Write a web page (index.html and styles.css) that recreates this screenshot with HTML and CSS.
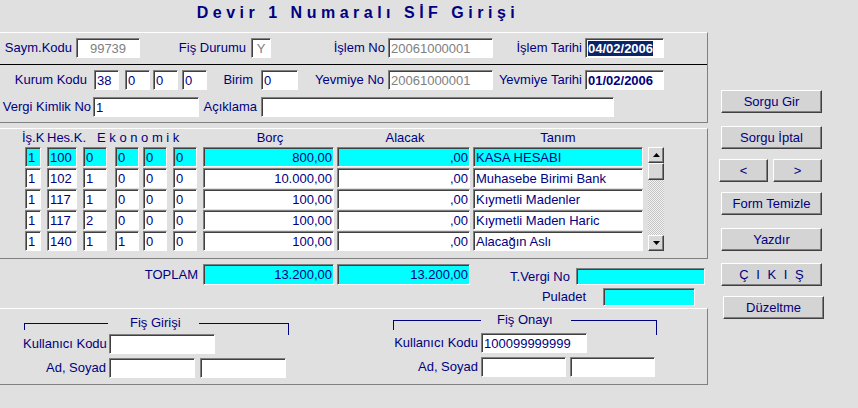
FILE: index.html
```html
<!DOCTYPE html>
<html lang="tr">
<head>
<meta charset="utf-8">
<title>Devir 1 Numaralı SİF Girişi</title>
<link rel="stylesheet" href="styles.css">
</head>
<body>
<div class="screen">
  <main class="main">
    <h1 class="title">Devir 1 Numaralı SİF Girişi</h1>

    <section class="panel">
      <div class="row head-r1">
        <span class="lbl l-saym">Saym.Kodu</span>
        <div class="f dis center w64">99739</div>
        <span class="lbl l-fis">Fiş Durumu</span>
        <div class="f dis center w20">Y</div>
        <span class="lbl l-islno">İşlem No</span>
        <div class="f dis w105">20061000001</div>
        <span class="lbl l-tarih">İşlem Tarihi</span>
        <div class="f w79"><span class="sel">04/02/2006</span></div>
      </div>
      <div class="row head-r2">
        <span class="lbl l-kurum">Kurum Kodu</span>
        <div class="f w25">38</div>
        <div class="f w25 ml6">0</div>
        <div class="f w25 ml3">0</div>
        <div class="f w25 ml4">0</div>
        <span class="lbl l-birim">Birim</span>
        <div class="f w37">0</div>
        <span class="lbl l-yevno">Yevmiye No</span>
        <div class="f dis w105">20061000001</div>
        <span class="lbl l-tarih">Yevmiye Tarihi</span>
        <div class="f w79 bold">01/02/2006</div>
      </div>
      <div class="row head-r3">
        <span class="lbl l-vergi">Vergi Kimlik No</span>
        <div class="f w106">1</div>
        <span class="lbl l-acik">Açıklama</span>
        <div class="f w353"></div>
      </div>
    </section>

    <section class="panel grid-panel">
      <div class="ghead">
        <span class="h-isk">İş.K</span>
        <span class="h-hes">Hes.K.</span>
        <span class="h-eko">E k o n o m i k</span>
        <span class="h-borc">Borç</span>
        <span class="h-alacak">Alacak</span>
        <span class="h-tanim">Tanım</span>
      </div>
      <div class="grid-body">
        <div class="rows">
          <div class="drow cur">
            <div class="f c-isk">1</div><div class="f c-hes">100</div><div class="f c-e1">0</div><div class="f c-e2">0</div><div class="f c-e3">0</div><div class="f c-e4">0</div><div class="f c-borc">800,00</div><div class="f c-alacak">,00</div><div class="f c-tanim">KASA HESABI</div>
          </div>
          <div class="drow">
            <div class="f c-isk">1</div><div class="f c-hes">102</div><div class="f c-e1">1</div><div class="f c-e2">0</div><div class="f c-e3">0</div><div class="f c-e4">0</div><div class="f c-borc">10.000,00</div><div class="f c-alacak">,00</div><div class="f c-tanim">Muhasebe Birimi Bank</div>
          </div>
          <div class="drow">
            <div class="f c-isk">1</div><div class="f c-hes">117</div><div class="f c-e1">1</div><div class="f c-e2">0</div><div class="f c-e3">0</div><div class="f c-e4">0</div><div class="f c-borc">100,00</div><div class="f c-alacak">,00</div><div class="f c-tanim">Kıymetli Madenler</div>
          </div>
          <div class="drow">
            <div class="f c-isk">1</div><div class="f c-hes">117</div><div class="f c-e1">2</div><div class="f c-e2">0</div><div class="f c-e3">0</div><div class="f c-e4">0</div><div class="f c-borc">100,00</div><div class="f c-alacak">,00</div><div class="f c-tanim">Kıymetli Maden Haric</div>
          </div>
          <div class="drow">
            <div class="f c-isk">1</div><div class="f c-hes">140</div><div class="f c-e1">1</div><div class="f c-e2">1</div><div class="f c-e3">0</div><div class="f c-e4">0</div><div class="f c-borc">100,00</div><div class="f c-alacak">,00</div><div class="f c-tanim">Alacağın Aslı</div>
          </div>
        </div>
        <div class="sb">
          <div class="sb-btn"><svg width="7" height="4" viewBox="0 0 7 4"><path d="M0 4H7L3.5 0Z" fill="#000"/></svg></div>
          <div class="sb-btn sb-thumb"></div>
          <div class="sb-space"></div>
          <div class="sb-btn"><svg width="7" height="4" viewBox="0 0 7 4"><path d="M0 0H7L3.5 4Z" fill="#000"/></svg></div>
        </div>
      </div>
    </section>

    <section class="totals">
      <span class="lbl l-toplam">TOPLAM</span>
      <div class="f cy h21 w131 right">13.200,00</div>
      <div class="f cy h21 w133 ml3 right">13.200,00</div>
      <div class="tot-right">
        <div class="row">
          <span class="lbl l-tv">T.Vergi No</span>
          <div class="f cy h17 w129"></div>
        </div>
        <div class="row pul-row">
          <span class="lbl l-pul">Puladet</span>
          <div class="f cy h18 w92"></div>
        </div>
      </div>
    </section>

    <section class="panel foot">
      <div class="group g1">
        <div class="legend">
          <span class="lg-line lg-l"></span>
          <span class="lg-title">Fiş Girişi</span>
          <span class="lg-line lg-r"></span>
        </div>
        <div class="row grow">
          <span class="lbl glbl">Kullanıcı Kodu</span>
          <div class="f w106"></div>
        </div>
        <div class="row grow">
          <span class="lbl glbl">Ad, Soyad</span>
          <div class="f w86"></div>
          <div class="f w86 ml5"></div>
        </div>
      </div>
      <div class="group g2">
        <div class="legend">
          <span class="lg-line lg-l"></span>
          <span class="lg-title">Fiş Onayı</span>
          <span class="lg-line lg-r"></span>
        </div>
        <div class="row grow">
          <span class="lbl glbl">Kullanıcı Kodu</span>
          <div class="f w106">100099999999</div>
        </div>
        <div class="row grow">
          <span class="lbl glbl">Ad, Soyad</span>
          <div class="f w85"></div>
          <div class="f w85 ml4"></div>
        </div>
      </div>
    </section>
  </main>

  <aside class="side">
    <button class="btn">Sorgu Gir</button>
    <button class="btn mt13">Sorgu İptal</button>
    <div class="nav">
      <button class="btn half">&lt;</button>
      <button class="btn half">&gt;</button>
    </div>
    <button class="btn mt10">Form Temizle</button>
    <button class="btn mt13">Yazdır</button>
    <button class="btn mt12 exit">Ç I K I Ş</button>
    <button class="btn mt10 fix">Düzeltme</button>
  </aside>
</div>
</body>
</html>
```

FILE: styles.css
```css
* { box-sizing: border-box; }
html, body { margin: 0; padding: 0; }
body {
  width: 858px;
  height: 408px;
  overflow: hidden;
  background: #e0e0e0;
  font-family: "Liberation Sans", Arial, sans-serif;
  font-size: 13px;
  color: #000080;
}
.screen { display: flex; align-items: flex-start; }
.main { width: 708px; flex: none; }

.title {
  margin: 0;
  height: 32px;
  padding: 3px 0 0 8px;
  font-size: 16px;
  font-weight: bold;
  line-height: 20px;
  letter-spacing: 4.5px;
  text-align: center;
  color: #000080;
  white-space: pre;
}

.panel {
  border-top: 1px solid #fff;
  border-right: 1px solid #808080;
  border-bottom: 1px solid #808080;
}

.row { display: flex; align-items: center; }
.lbl {
  flex: none;
  text-align: right;
  white-space: nowrap;
  line-height: 20px;
}

/* sunken field */
.f {
  flex: none;
  height: 20px;
  border: 1px solid;
  border-color: #808080 #fff #fff #808080;
  box-shadow: inset 1px 1px 0 #404040;
  background: #fff;
  padding: 1px 2px 0;
  line-height: 17px;
  white-space: nowrap;
  overflow: hidden;
  color: #000080;
}
.dis { color: #808080; }
.center { text-align: center; }
.right { text-align: right; padding-right: 1px; }
.bold { font-weight: bold; }
.cy { background: #00ffff; }
.sel { background: #0a246a; color: #fff; font-weight: bold; }

.w20 { width: 20px; }
.w25 { width: 25px; }
.w37 { width: 37px; }
.w64 { width: 64px; }
.w79 { width: 79px; }
.w85 { width: 85px; }
.w86 { width: 86px; }
.w92 { width: 92px; }
.w105 { width: 105px; }
.w106 { width: 106px; }
.w129 { width: 129px; }
.w131 { width: 131px; }
.w133 { width: 133px; }
.w353 { width: 353px; }
.ml3 { margin-left: 3px; }
.ml4 { margin-left: 4px; }
.ml5 { margin-left: 5px; }
.ml6 { margin-left: 6px; }

/* header panel rows */
.head-r1 { padding: 5px 0 6px; border-bottom: 1px solid #000; }
.head-r2 { padding-top: 5px; }
.head-r3 { padding: 7px 0 5px; }

.l-saym { width: 76px; padding-right: 4px; }
.l-fis { width: 111px; padding-right: 5px; }
.l-islno { width: 117px; padding-right: 3px; }
.l-tarih { width: 92px; padding-right: 3px; }
.l-kurum { width: 94px; padding-right: 7px; }
.l-birim { width: 54px; padding-right: 8px; }
.l-yevno { width: 90px; padding-right: 4px; }
.l-vergi { width: 93px; padding-right: 2px; }
.l-acik { width: 62px; padding-right: 4px; }

/* grid */
.grid-panel { margin-top: 5px; padding-bottom: 7px; }
.ghead {
  display: flex;
  height: 18px;
  line-height: 18px;
  margin-left: 22px;
  white-space: pre;
}
.h-isk { width: 25px; }
.h-hes { width: 50px; }
.h-eko { width: 106px; }
.h-borc { width: 134px; text-align: center; }
.h-alacak { width: 136px; text-align: center; }
.h-tanim { width: 170px; text-align: center; }

.grid-body { display: flex; margin-left: 25px; }
.rows { display: flex; flex-direction: column; gap: 1px; }
.drow { display: flex; }
.drow.cur .f { background: #00ffff; }
.c-isk { width: 16px; margin-right: 6px; }
.c-hes { width: 30px; margin-right: 6px; }
.c-e1 { width: 24px; margin-right: 8px; }
.c-e2 { width: 24px; margin-right: 4px; }
.c-e3 { width: 24px; margin-right: 6px; }
.c-e4 { width: 24px; margin-right: 6px; }
.c-borc { width: 131px; margin-right: 3px; text-align: right; padding-right: 1px; }
.c-alacak { width: 133px; margin-right: 3px; text-align: right; padding-right: 1px; }
.c-tanim { width: 170px; }

.sb {
  width: 16px;
  height: 104px;
  margin-left: 5px;
  display: flex;
  flex-direction: column;
  background: repeating-conic-gradient(#c4c4c4 0 25%, #f2f2f2 0 50%) 0 0 / 2px 2px;
}
.sb-btn {
  width: 16px;
  height: 16px;
  flex: none;
  display: flex;
  align-items: center;
  justify-content: center;
  background: #d8d8d8;
  border: 1px solid;
  border-color: #fff #404040 #404040 #fff;
  box-shadow: inset -1px -1px 0 #808080;
}
.sb-thumb { height: 17px; }
.sb-space { flex: 1; }

/* totals */
.totals {
  height: 49px;
  display: flex;
  align-items: flex-start;
  padding-top: 5px;
}
.l-toplam { width: 203px; padding-right: 5px; line-height: 21px; }
.h21 { height: 21px; line-height: 18px; }
.h17 { height: 17px; line-height: 14px; }
.h18 { height: 18px; line-height: 15px; }
.tot-right { padding-top: 4px; display: flex; flex-direction: column; }
.l-tv { width: 106px; padding-right: 6px; line-height: 17px; }
.pul-row { margin-top: 3px; }
.l-pul { width: 133px; padding-right: 17px; line-height: 18px; }

/* footer groups */
.foot { display: flex; align-items: flex-start; padding: 7px 0 6px; }
.group { display: flex; flex-direction: column; }
.g1 { margin-left: 23px; width: 266px; }
.g2 { margin-left: 104px; width: 264px; }
.legend { display: flex; align-items: flex-start; height: 14px; }
.lg-line { border-top: 1px solid #000080; margin-top: 7px; }
.lg-l { border-left: 1px solid #000080; flex: none; }
.lg-r { border-right: 1px solid #000080; flex: 1; }
.lg-title { line-height: 14px; white-space: nowrap; }
.g1 .legend { margin-left: 1px; }
.g1 .lg-l { width: 84px; height: 7px; }
.g1 .lg-title { padding: 0 18px 0 22px; }
.g1 .lg-r { height: 12px; }
.g2 .legend { margin-top: -3px; margin-bottom: 2px; }
.g2 .lg-l { width: 88px; height: 10px; }
.g2 .lg-title { padding: 0 18px 0 16px; }
.g2 .lg-r { height: 15px; }
.grow { margin-top: 4px; }
.g1 .glbl { width: 86px; padding-right: 3px; }
.g2 .glbl { width: 88px; padding-right: 3px; }

/* side buttons */
.side {
  flex: none;
  width: 110px;
  margin-left: 13px;
  padding-top: 90px;
  display: flex;
  flex-direction: column;
  align-items: flex-start;
}
.btn {
  width: 101px;
  height: 23px;
  margin: 0;
  padding: 0;
  background: #d4d4d4;
  border: 1px solid;
  border-color: #fff #404040 #404040 #fff;
  box-shadow: inset -1px -1px 0 #808080;
  font-family: inherit;
  font-size: 13px;
  line-height: 20px;
  color: #000080;
  text-align: center;
}
.btn.half { width: 49px; }
.nav { display: flex; gap: 5px; margin-top: 10px; margin-left: -2px; }
.mt10 { margin-top: 10px; }
.mt12 { margin-top: 12px; }
.mt13 { margin-top: 13px; }
.exit { letter-spacing: 2px; padding-left: 2px; }
.fix { margin-left: 2px; }
```
